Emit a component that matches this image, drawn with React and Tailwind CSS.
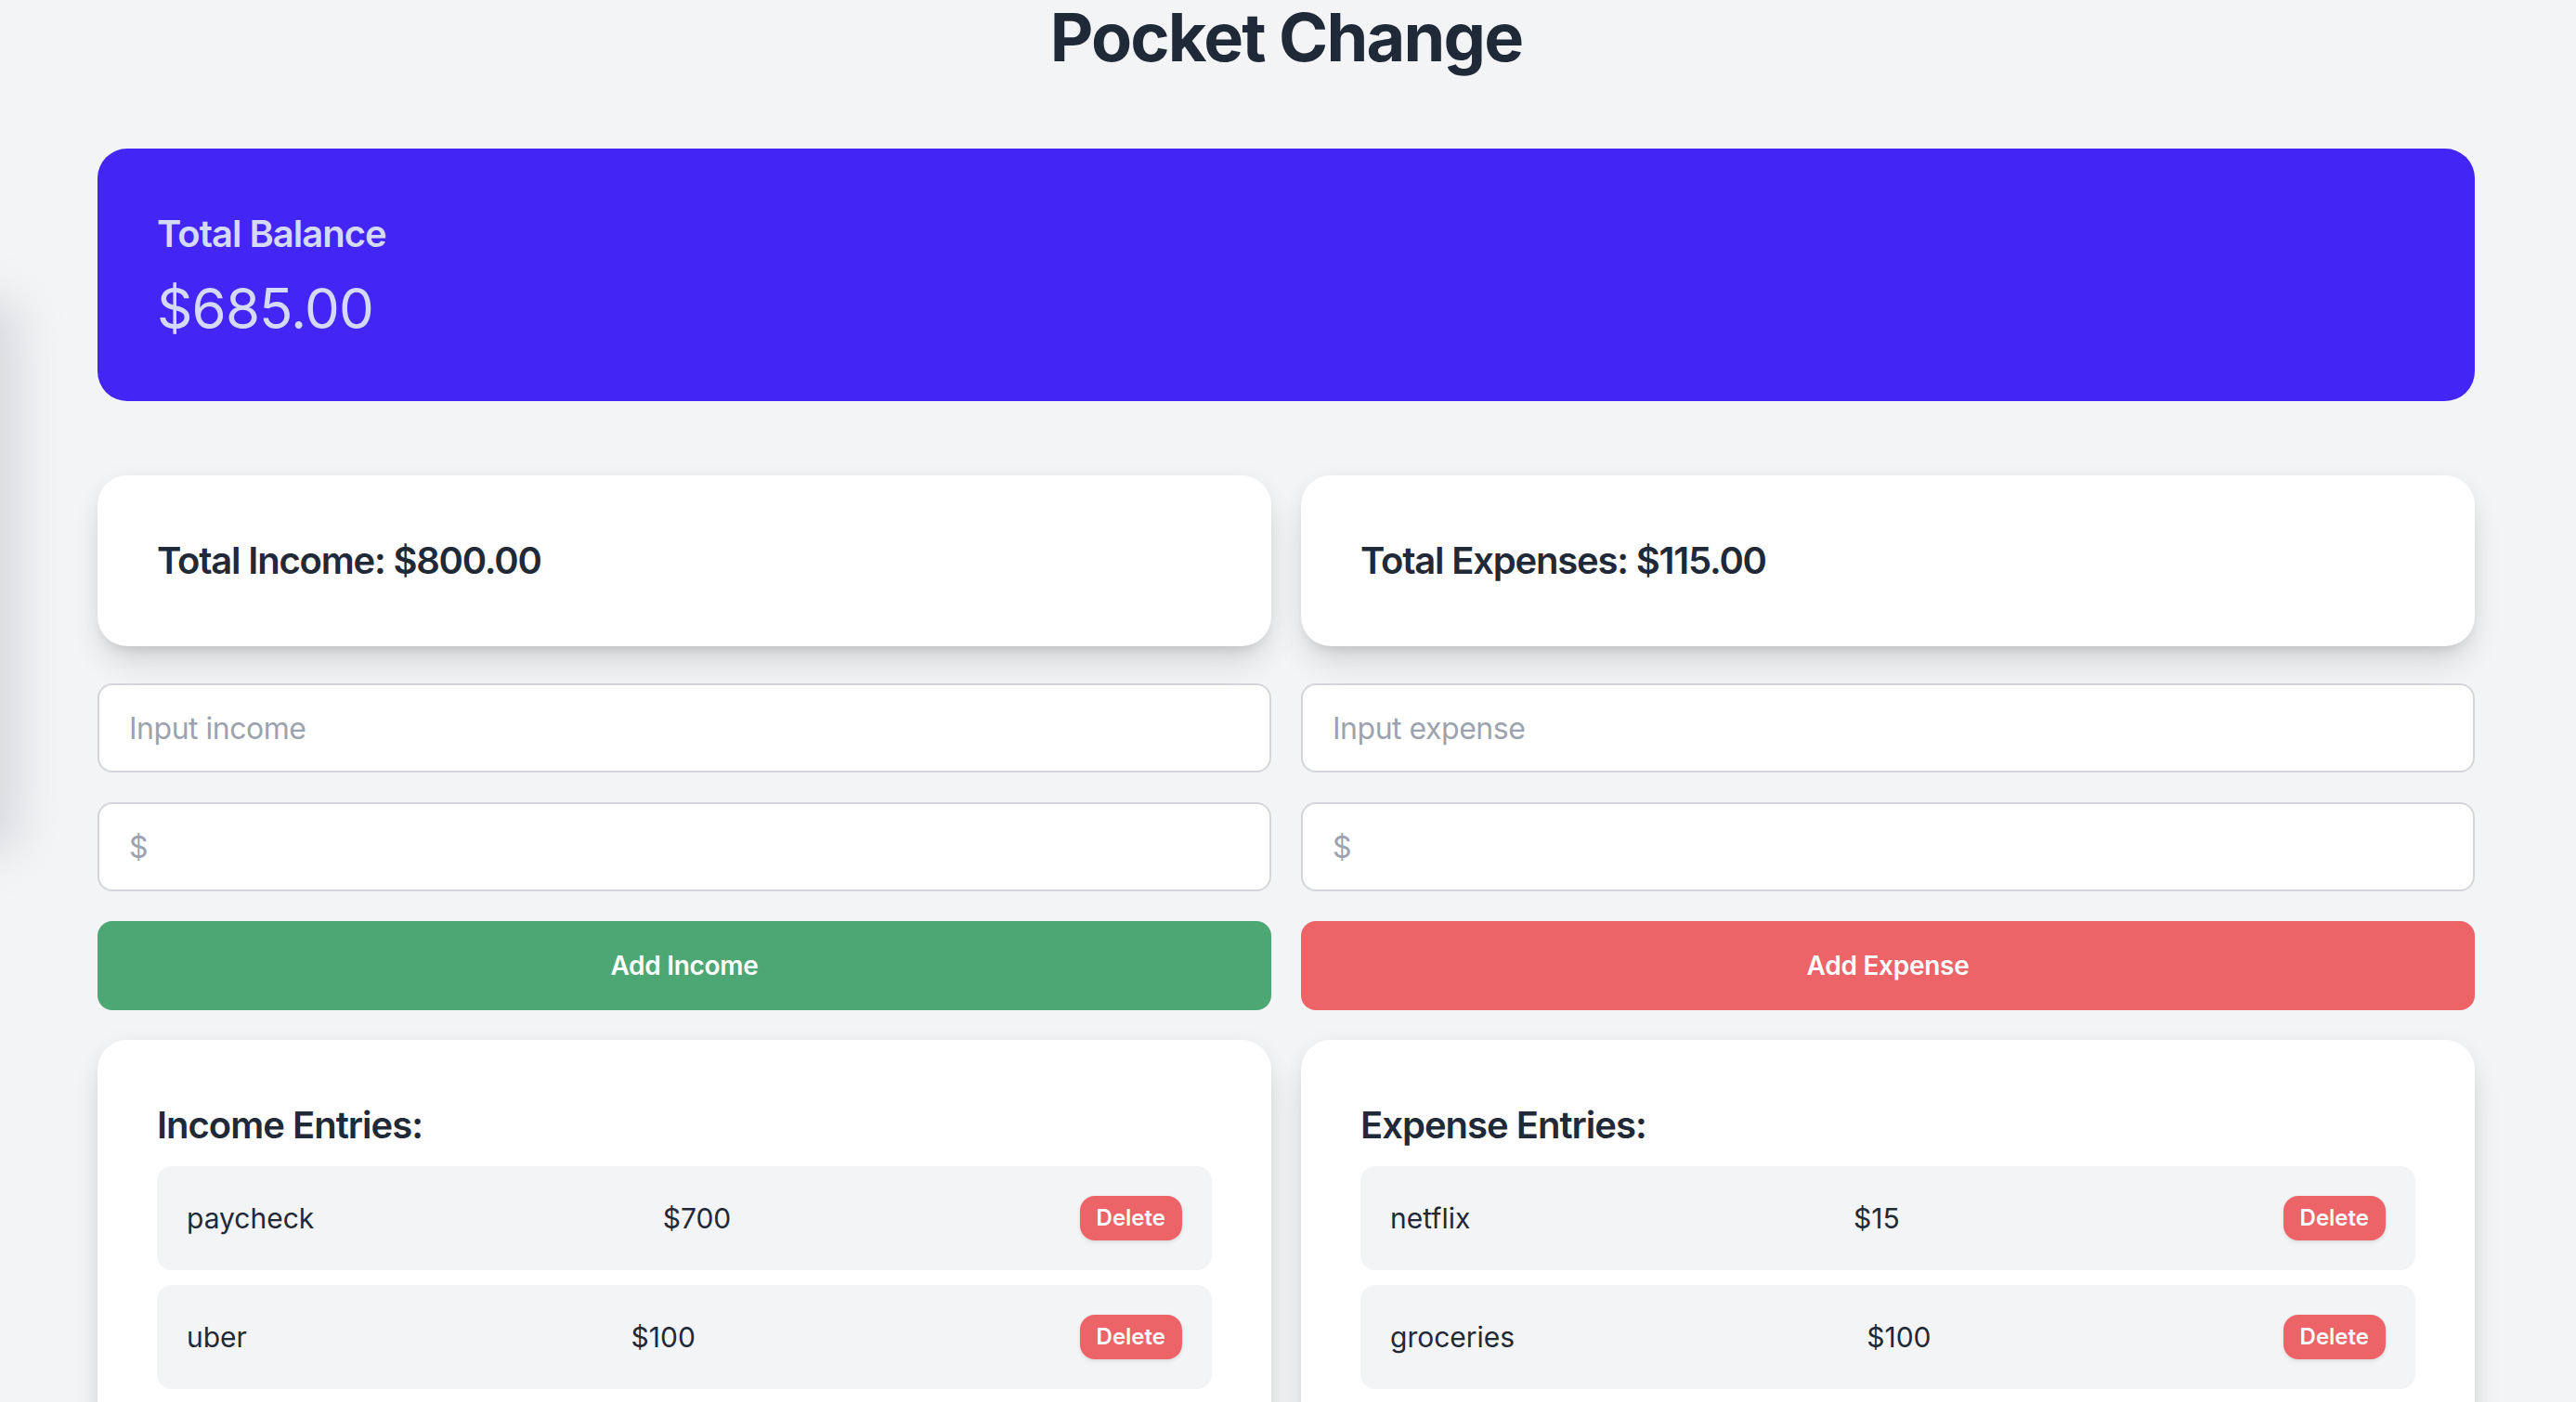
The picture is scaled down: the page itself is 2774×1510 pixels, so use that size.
import React from "react";

const cardShadow =
  "shadow-[0_20px_36px_-8px_rgba(0,0,0,0.16),0_8px_14px_-8px_rgba(0,0,0,0.12),0_0_24px_rgba(0,0,0,0.03)]";

function Row({ name, amount }) {
  return (
    <div className="flex items-center justify-between rounded-[16px] bg-[#f3f4f6] p-8">
      <span className="text-[30px] leading-[40px]">{name}</span>
      <span className="text-[30px] leading-[40px]">{amount}</span>
      <button className="rounded-[16px] bg-[#ec6467] px-[18px] py-2 text-[24px] font-semibold leading-[32px] text-white shadow-[0_2px_4px_rgba(0,0,0,0.1)]">
        Delete
      </button>
    </div>
  );
}

function Column({ totalLabel, total, placeholder, btnLabel, btnColor, entriesLabel, entries }) {
  return (
    <div className="flex flex-col">
      <div className={`relative z-10 rounded-[32px] bg-white p-16 ${cardShadow}`}>
        <h2 className="text-[40px] font-semibold leading-[56px] tracking-[-0.03em]">
          {totalLabel}: {total}
        </h2>
      </div>
      <input
        className="mt-10 block h-24 w-full rounded-[16px] border-2 border-[#d4d6db] bg-white px-8 text-[32px] tracking-[-0.015em] outline-none placeholder:text-[#9ca3af]"
        placeholder={placeholder}
      />
      <input
        className="mt-8 block h-24 w-full rounded-[16px] border-2 border-[#d4d6db] bg-white px-8 text-[32px] tracking-[-0.015em] outline-none placeholder:text-[#9ca3af]"
        placeholder="$"
      />
      <button
        className={`mt-8 h-24 w-full rounded-[16px] text-[28px] font-semibold tracking-[-0.01em] text-white ${btnColor}`}
      >
        {btnLabel}
      </button>
      <div className={`mt-8 rounded-[32px] bg-white p-16 ${cardShadow}`}>
        <h2 className="mb-4 text-[40px] font-semibold leading-[56px] tracking-[-0.025em]">
          {entriesLabel}
        </h2>
        <div className="flex flex-col gap-4">
          {entries.map((e) => (
            <Row key={e.name} name={e.name} amount={e.amount} />
          ))}
        </div>
      </div>
    </div>
  );
}

export default function App() {
  return (
    <div className="relative min-h-screen overflow-hidden bg-[#f3f4f6] font-['Inter',sans-serif] text-[#1f2937]">
      <div className="pointer-events-none absolute left-[-44px] top-[320px] h-[600px] w-[64px] rounded-full bg-[#b4b6ba] opacity-45 blur-[24px]" />
      <div className="absolute bottom-0 right-0 h-[14px] w-[5px] rounded-tl-[6px] bg-black" />
      <div className="ml-[105px] w-[2560px] pb-20">
        <h1 className="text-center text-[72px] font-bold leading-[80px] tracking-[-0.025em]">
          Pocket Change
        </h1>
        <div className="mt-20 rounded-[32px] bg-[#4326f5] p-16 text-[#d5dafd]">
          <h2 className="text-[40px] font-semibold leading-[56px] tracking-[-0.025em]">Total Balance</h2>
          <p className="mt-4 text-[60px] leading-[72px] tracking-[-0.015em]">$685.00</p>
        </div>
        <div className="mt-20 grid grid-cols-2 gap-8">
          <Column
            totalLabel="Total Income"
            total="$800.00"
            placeholder="Input income"
            btnLabel="Add Income"
            btnColor="bg-[#4da774]"
            entriesLabel="Income Entries:"
            entries={[
              { name: "paycheck", amount: "$700" },
              { name: "uber", amount: "$100" },
            ]}
          />
          <Column
            totalLabel="Total Expenses"
            total="$115.00"
            placeholder="Input expense"
            btnLabel="Add Expense"
            btnColor="bg-[#ec6467]"
            entriesLabel="Expense Entries:"
            entries={[
              { name: "netflix", amount: "$15" },
              { name: "groceries", amount: "$100" },
            ]}
          />
        </div>
      </div>
    </div>
  );
}
